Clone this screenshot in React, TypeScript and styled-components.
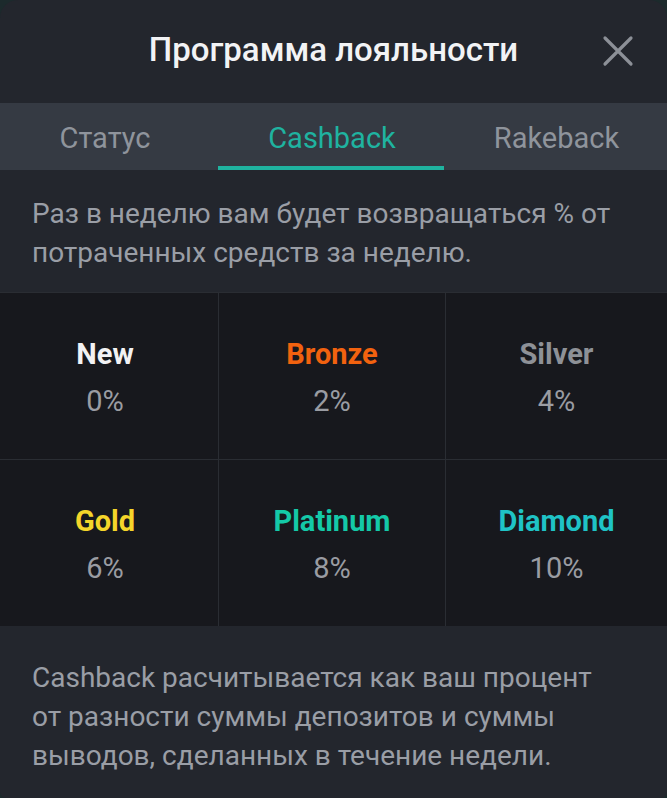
import React from "react";
import styled, { createGlobalStyle } from "styled-components";

const Global = createGlobalStyle`
  html, body { margin: 0; padding: 0; background: #1c2a2c; }
  body { font-family: Roboto, "Noto Sans", Arial, sans-serif; -webkit-font-smoothing: antialiased; }
  #root { width: 667px; height: 798px; }
`;

const Modal = styled.div`
  width: 667px;
  height: 798px;
  background: #23262d;
  border-radius: 18px 18px 6px 6px;
  overflow: hidden;
  display: flex;
  flex-direction: column;
`;

const Header = styled.div`
  height: 103px;
  display: flex;
  align-items: center;
  justify-content: center;
  position: relative;
  flex-shrink: 0;
`;

const Title = styled.h1`
  margin: 0;
  font-size: 33px;
  font-weight: 500;
  line-height: 40px;
  color: #f2f3f5;
  transform: translateY(-2px);
`;

const Close = styled.button`
  position: absolute;
  right: 31px;
  top: 33px;
  width: 36px;
  height: 36px;
  padding: 0;
  border: 0;
  background: none;
  display: flex;
  align-items: center;
  justify-content: center;
  cursor: pointer;
`;

const Tabs = styled.div`
  height: 67px;
  background: #353a43;
  display: grid;
  grid-template-columns: 218px 228px 1fr;
  flex-shrink: 0;
`;

const Tab = styled.div<{ $active?: boolean; $first?: boolean }>`
  display: flex;
  align-items: center;
  justify-content: center;
  font-size: 29px;
  font-weight: 400;
  color: ${(p) => (p.$active ? "#1fb3a0" : "#8f949c")};
  position: relative;
  padding-top: 2px;
  padding-right: ${(p) => (p.$first ? "8px" : "0")};
  box-sizing: border-box;
  &::after {
    content: "";
    display: ${(p) => (p.$active ? "block" : "none")};
    position: absolute;
    left: 0;
    right: 2px;
    bottom: 0;
    height: 4px;
    background: #1fb3a0;
  }
`;

const Text = styled.p`
  margin: 0;
  font-size: 28px;
  line-height: 39px;
  color: #9a9ea6;
`;

const Intro = styled.div`
  height: 122px;
  box-sizing: border-box;
  padding: 24px 32px 0;
  flex-shrink: 0;
`;

const Grid = styled.div`
  display: grid;
  grid-template-columns: 218px 226px 1fr;
  grid-auto-rows: 166px;
  gap: 1px;
  background: #2a2d33;
  border-top: 1px solid #2a2d33;
  flex-shrink: 0;
`;

const Cell = styled.div<{ $first?: boolean }>`
  background: #17181d;
  display: flex;
  flex-direction: column;
  align-items: center;
  justify-content: center;
  gap: 13px;
  padding-top: 2px;
  padding-right: ${(p) => (p.$first ? "8px" : "0")};
  box-sizing: border-box;
`;

const Level = styled.div<{ $color: string }>`
  font-size: 29px;
  font-weight: 700;
  color: ${(p) => p.$color};
  line-height: 34px;
`;

const Pct = styled.div`
  font-size: 29px;
  font-weight: 400;
  color: #9a9ca2;
  line-height: 34px;
`;

const Footer = styled.div`
  padding: 32px 32px 0;
  flex: 1;
`;

const levels = [
  { name: "New", color: "#f2f2f4", pct: "0%" },
  { name: "Bronze", color: "#f2620f", pct: "2%" },
  { name: "Silver", color: "#8e9197", pct: "4%" },
  { name: "Gold", color: "#f5d52a", pct: "6%" },
  { name: "Platinum", color: "#14c9a8", pct: "8%" },
  { name: "Diamond", color: "#1fc3c6", pct: "10%" },
];

export default function App() {
  return (
    <>
      <Global />
      <Modal>
        <Header>
          <Title>Программа лояльности</Title>
          <Close aria-label="close">
            <svg width="32" height="32" viewBox="0 0 32 32">
              <path d="M3 3 L29 29 M29 3 L3 29" stroke="#8c9097" strokeWidth="3.2" strokeLinecap="round" />
            </svg>
          </Close>
        </Header>
        <Tabs>
          <Tab $first>Статус</Tab>
          <Tab $active>Cashback</Tab>
          <Tab>Rakeback</Tab>
        </Tabs>
        <Intro>
          <Text>
            Раз в неделю вам будет возвращаться % от
            <br />
            потраченных средств за неделю.
          </Text>
        </Intro>
        <Grid>
          {levels.map((l, i) => (
            <Cell key={l.name} $first={i % 3 === 0}>
              <Level $color={l.color}>{l.name}</Level>
              <Pct>{l.pct}</Pct>
            </Cell>
          ))}
        </Grid>
        <Footer>
          <Text>
            Cashback расчитывается как ваш процент
            <br />
            от разности суммы депозитов и суммы
            <br />
            выводов, сделанных в течение недели.
          </Text>
        </Footer>
      </Modal>
    </>
  );
}
